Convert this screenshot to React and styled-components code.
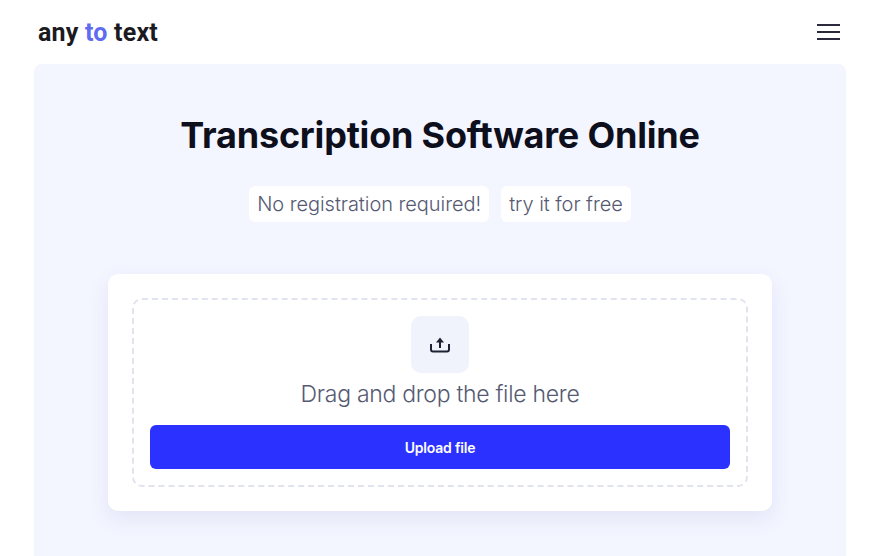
import styled, { createGlobalStyle } from "styled-components";

const GlobalStyle = createGlobalStyle`
  html, body {
    margin: 0;
    height: 100%;
    overflow: hidden;
    background: #fff;
    font-family: Inter, "Open Sans", sans-serif;
  }
  * {
    box-sizing: border-box;
  }
`;

const Page = styled.div`
  width: 880px;
  height: 556px;
  padding: 0 34px;
  overflow: hidden;
`;

const Header = styled.header`
  height: 64px;
  display: flex;
  align-items: center;
  justify-content: space-between;
  padding: 0 6px 0 4px;
`;

const Logo = styled.div`
  font-family: Roboto, sans-serif;
  font-size: 25px;
  font-weight: 700;
  letter-spacing: 0.2px;
  color: #1b1b1f;
`;

const LogoAccent = styled.span`
  color: #5f6cf0;
`;

const MenuButton = styled.button`
  width: 23px;
  height: 16px;
  padding: 0;
  border: 0;
  background: none;
  display: flex;
  flex-direction: column;
  justify-content: space-between;
  cursor: pointer;
`;

const MenuLine = styled.span`
  display: block;
  height: 2px;
  background: #2a2a3c;
`;

const Panel = styled.main`
  height: 520px;
  padding-top: 48px;
  border-radius: 8px 8px 0 0;
  background: #f3f5ff;
  display: flex;
  flex-direction: column;
  align-items: center;
`;

const Title = styled.h1`
  margin: 0;
  font-size: 36px;
  line-height: 46px;
  font-weight: 700;
  letter-spacing: -0.2px;
  color: #0d0f1c;
`;

const Chips = styled.div`
  display: flex;
  gap: 12px;
  margin-top: 28px;
`;

const Chip = styled.span`
  height: 36px;
  padding: 0 8px;
  border-radius: 6px;
  background: #fff;
  font-size: 20px;
  font-weight: 300;
  letter-spacing: -0.05px;
  line-height: 36px;
  color: #555a72;
`;

const Card = styled.section`
  width: 664px;
  height: 237px;
  margin-top: 52px;
  padding: 24px;
  border-radius: 10px;
  background: #fff;
  box-shadow: 0 8px 20px rgba(90, 100, 170, 0.1);
`;

const DropZone = styled.div`
  height: 189px;
  padding: 16px;
  border: 2px dashed #e1e4ee;
  border-radius: 10px;
  display: flex;
  flex-direction: column;
  align-items: center;
`;

const IconBox = styled.div`
  width: 58px;
  height: 57px;
  border-radius: 10px;
  background: #f0f2fc;
  display: flex;
  align-items: center;
  justify-content: center;
`;

const DropText = styled.p`
  margin: 5px 0 0;
  font-size: 23px;
  line-height: 32px;
  font-weight: 300;
  letter-spacing: -0.29px;
  color: #555a72;
`;

const UploadButton = styled.button`
  width: 100%;
  height: 44px;
  margin-top: 15px;
  border: 0;
  border-radius: 6px;
  background: #2b32ff;
  color: #fff;
  font-family: inherit;
  font-size: 14px;
  font-weight: 600;
  letter-spacing: -0.2px;
  cursor: pointer;
`;

const UploadIcon = () => (
  <svg width="20" height="16" viewBox="0 0 20 16" fill="none">
    <path
      d="M1 7v5.5a2 2 0 0 0 2 2h14a2 2 0 0 0 2-2V7"
      stroke="#1c2233"
      strokeWidth="2"
    />
    <path d="M10 5v6" stroke="#1c2233" strokeWidth="2" />
    <path d="M10 0.5 14 5.5H6Z" fill="#1c2233" />
  </svg>
);

export default function App() {
  return (
    <Page>
      <GlobalStyle />
      <Header>
        <Logo>
          any <LogoAccent>to</LogoAccent> text
        </Logo>
        <MenuButton aria-label="Menu">
          <MenuLine />
          <MenuLine />
          <MenuLine />
        </MenuButton>
      </Header>
      <Panel>
        <Title>Transcription Software Online</Title>
        <Chips>
          <Chip>No registration required!</Chip>
          <Chip>try it for free</Chip>
        </Chips>
        <Card>
          <DropZone>
            <IconBox>
              <UploadIcon />
            </IconBox>
            <DropText>Drag and drop the file here</DropText>
            <UploadButton>Upload file</UploadButton>
          </DropZone>
        </Card>
      </Panel>
    </Page>
  );
}
